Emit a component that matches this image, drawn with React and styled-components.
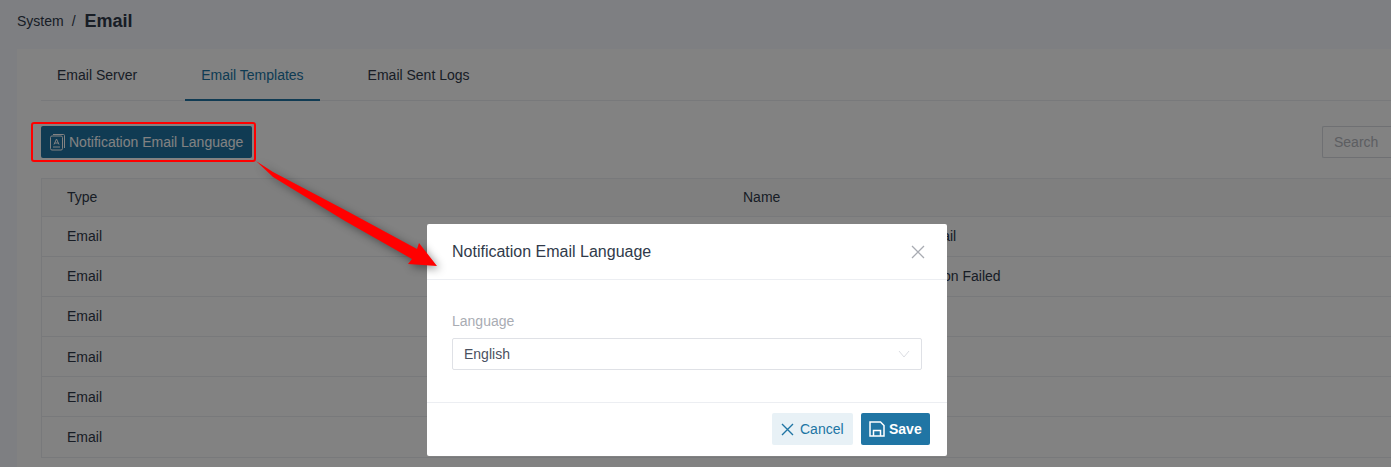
import React from "react";
import styled, { createGlobalStyle } from "styled-components";

const GlobalStyle = createGlobalStyle`
  html, body {
    margin: 0;
    height: 467px;
    overflow: hidden;
    background: #f7f9ff;
    font-family: "Liberation Sans", Arial, sans-serif;
    font-size: 14px;
    color: #303a4a;
  }
`;

const Page = styled.div`
  height: 467px;
  box-sizing: border-box;
  display: flex;
  flex-direction: column;
  padding-left: 17px;
  overflow: hidden;
`;

const Breadcrumb = styled.div`
  height: 49px;
  flex: none;
  display: flex;
  align-items: flex-start;
  padding-top: 12px;
  box-sizing: border-box;
  line-height: 18px;
`;

const Crumb = styled.span``;

const Slash = styled.span`
  margin: 0 8px;
`;

const CrumbTitle = styled.span`
  margin-left: 1px;
  font-size: 18px;
  font-weight: 700;
  color: #303a4a;
`;

const Card = styled.div`
  flex: 1;
  background: #fff;
  padding: 1px 0 0 24px;
`;

const Tabs = styled.div`
  display: flex;
  gap: 32px;
  height: 50px;
  border-bottom: 1px solid #eceef2;
`;

const Tab = styled.div`
  padding: 0 16px;
  line-height: 50px;
  box-sizing: border-box;
  color: ${(p) => (p.$active ? "#2075a4" : "#303a4a")};
  border-bottom: ${(p) => (p.$active ? "2px solid #2075a4" : "none")};
  height: ${(p) => (p.$active ? "51px" : "50px")};
`;

const Toolbar = styled.div`
  display: flex;
  justify-content: space-between;
  align-items: center;
  height: 32px;
  margin-top: 25px;
`;

const LanguageButton = styled.button`
  display: flex;
  align-items: center;
  gap: 2px;
  width: 211px;
  height: 32px;
  padding: 0 0 0 8px;
  border: none;
  border-radius: 2px;
  background: #2075a4;
  color: #fff;
  font: inherit;
`;

const SearchInput = styled.input`
  width: 69px;
  height: 32px;
  box-sizing: border-box;
  padding: 0 0 0 11px;
  border: 1px solid #d9dce2;
  border-right: none;
  border-radius: 2px 0 0 2px;
  background: #fff;
  font: inherit;
  &::placeholder {
    color: #b6b9bf;
  }
`;

const Table = styled.div`
  margin-top: 20px;
  border-left: 1px solid #eceef2;
  border-top: 1px solid #eceef2;
`;

const Row = styled.div`
  display: grid;
  grid-template-columns: 676px 1fr;
  align-items: center;
  height: ${(p) => (p.$head ? "37.5px" : "40.2px")};
  box-sizing: border-box;
  padding-left: 25px;
  border-bottom: 1px solid #eceef2;
  background: ${(p) => (p.$head ? "#fafafa" : "#fff")};
`;

const Overlay = styled.div`
  position: absolute;
  inset: 0;
  background: rgba(0, 0, 0, 0.49);
  display: flex;
  align-items: flex-start;
  padding: 224px 0 0 427px;
`;

const Modal = styled.div`
  width: 520px;
  height: 232px;
  background: #fff;
  border-radius: 2px;
  display: flex;
  flex-direction: column;
`;

const ModalHeader = styled.div`
  height: 56px;
  box-sizing: border-box;
  border-bottom: 1px solid #eceef2;
  display: flex;
  align-items: center;
  justify-content: space-between;
  padding: 0 22px 0 25px;
  font-size: 16px;
  color: #303a4a;
`;

const CloseIcon = styled.svg`
  display: block;
`;

const ModalBody = styled.div`
  flex: 1;
  padding: 32px 25px 0 25px;
`;

const FieldLabel = styled.div`
  color: #a9acb3;
  line-height: 18px;
  margin-bottom: 8px;
`;

const Select = styled.div`
  height: 32px;
  box-sizing: border-box;
  border: 1px solid #dfe1e6;
  border-radius: 2px;
  display: flex;
  align-items: center;
  justify-content: space-between;
  padding: 0 11px 0 11px;
  color: #4a5160;
`;

const ModalFooter = styled.div`
  height: 54px;
  box-sizing: border-box;
  border-top: 1px solid #eceef2;
  display: flex;
  justify-content: flex-end;
  align-items: flex-start;
  gap: 8px;
  padding: 10px 17px 0 0;
`;

const CancelButton = styled.button`
  display: flex;
  align-items: center;
  gap: 6px;
  width: 81px;
  height: 32px;
  padding: 0 0 0 9px;
  border: none;
  border-radius: 2px;
  background: #e8f1f6;
  color: #2075a4;
  font: inherit;
`;

const SaveButton = styled.button`
  display: flex;
  align-items: center;
  gap: 4px;
  width: 69px;
  height: 32px;
  padding: 0 0 0 8px;
  border: none;
  border-radius: 2px;
  background: #2075a4;
  color: #fff;
  font: inherit;
  font-weight: 700;
`;

const Highlight = styled.div`
  position: absolute;
  left: 31px;
  top: 122px;
  width: 225px;
  height: 40px;
  box-sizing: border-box;
  border: 2px solid #f00;
  border-radius: 3px;
`;

const Arrow = styled.svg`
  position: absolute;
  left: 0;
  top: 0;
  filter: drop-shadow(3px 3px 4px rgba(0, 0, 0, 0.4));
`;

const rows = [
  "Account Password Renewal Email",
  "Two-Factor Account Authentication Failed",
  "",
  "",
  "",
  "",
];

function LanguageIcon() {
  return (
    <svg width="18" height="18" viewBox="0 0 18 18" fill="none" stroke="#fff" strokeWidth="1">
      <path d="M4 1.5h10.5a1 1 0 0 1 1 1V15" />
      <rect x="1.5" y="3" width="12" height="14" rx="1.5" />
      <path d="M5 11.5 7.5 6l2.5 5.5M5.8 10h3.4M4 14h7" />
    </svg>
  );
}

function SaveIcon() {
  return (
    <svg width="16" height="16" viewBox="0 0 16 16" fill="none" stroke="#fff" strokeWidth="1.5">
      <path d="M1 1h10.5L15 4.5V15H1z" />
      <path d="M4.5 15V9.5h7V15" />
    </svg>
  );
}

export default function App() {
  return (
    <>
      <GlobalStyle />
      <Page>
        <Breadcrumb>
          <Crumb>System</Crumb>
          <Slash>/</Slash>
          <CrumbTitle>Email</CrumbTitle>
        </Breadcrumb>
        <Card>
          <Tabs>
            <Tab>Email Server</Tab>
            <Tab $active>Email Templates</Tab>
            <Tab>Email Sent Logs</Tab>
          </Tabs>
          <Toolbar>
            <LanguageButton>
              <LanguageIcon />
              Notification Email Language
            </LanguageButton>
            <SearchInput placeholder="Search" />
          </Toolbar>
          <Table>
            <Row $head>
              <span>Type</span>
              <span>Name</span>
            </Row>
            {rows.map((name, i) => (
              <Row key={i}>
                <span>Email</span>
                <span>{name}</span>
              </Row>
            ))}
          </Table>
        </Card>
      </Page>
      <Overlay>
        <Modal>
          <ModalHeader>
            Notification Email Language
            <CloseIcon width="14" height="14" viewBox="0 0 14 14" fill="none" stroke="#a8abb2" strokeWidth="1.3">
              <path d="M1 1l12 12M13 1 1 13" />
            </CloseIcon>
          </ModalHeader>
          <ModalBody>
            <FieldLabel>Language</FieldLabel>
            <Select>
              English
              <svg width="12" height="8" viewBox="0 0 12 8" fill="none" stroke="#dcdee3" strokeWidth="1">
                <path d="M1 1l5 6 5-6" />
              </svg>
            </Select>
          </ModalBody>
          <ModalFooter>
            <CancelButton>
              <svg width="13" height="13" viewBox="0 0 13 13" fill="none" stroke="#2075a4" strokeWidth="1.4">
                <path d="M1 1l11 11M12 1 1 12" />
              </svg>
              Cancel
            </CancelButton>
            <SaveButton>
              <SaveIcon />
              Save
            </SaveButton>
          </ModalFooter>
        </Modal>
      </Overlay>
      <Highlight />
      <Arrow width="1391" height="467" viewBox="0 0 1391 467">
        <polygon points="256,161 273,172 345,210 417,249 419,243 437,266 408,264 412,259 345,221 273,177" fill="#f00" />
      </Arrow>
    </>
  );
}
